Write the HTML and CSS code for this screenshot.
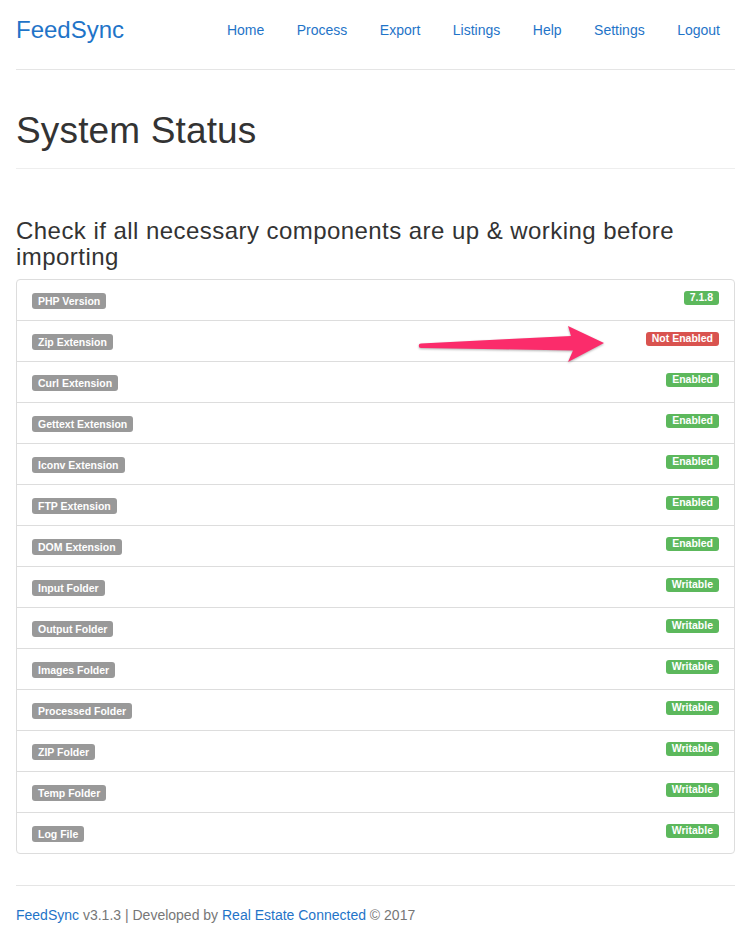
FILE: index.html
```html
<!DOCTYPE html>
<html lang="en">
<head>
<meta charset="utf-8">
<title>FeedSync - System Status</title>
<link rel="stylesheet" href="styles.css">
</head>
<body>
<div class="container">
  <header class="header">
    <a class="brand" href="#">FeedSync</a>
    <nav class="nav">
      <a href="#">Home</a>
      <a href="#">Process</a>
      <a href="#">Export</a>
      <a href="#">Listings</a>
      <a href="#">Help</a>
      <a href="#">Settings</a>
      <a href="#">Logout</a>
    </nav>
  </header>

  <div class="page-header">
    <h1>System Status</h1>
  </div>

  <h3 class="subtitle">Check if all necessary components are up &amp; working before importing</h3>

  <div class="list">
    <div class="row"><span class="label">PHP Version</span><span class="badge ok">7.1.8</span></div>
    <div class="row"><span class="label">Zip Extension</span><span class="badge bad">Not Enabled</span></div>
    <div class="row"><span class="label">Curl Extension</span><span class="badge ok">Enabled</span></div>
    <div class="row"><span class="label">Gettext Extension</span><span class="badge ok">Enabled</span></div>
    <div class="row"><span class="label">Iconv Extension</span><span class="badge ok">Enabled</span></div>
    <div class="row"><span class="label">FTP Extension</span><span class="badge ok">Enabled</span></div>
    <div class="row"><span class="label">DOM Extension</span><span class="badge ok">Enabled</span></div>
    <div class="row"><span class="label">Input Folder</span><span class="badge ok">Writable</span></div>
    <div class="row"><span class="label">Output Folder</span><span class="badge ok">Writable</span></div>
    <div class="row"><span class="label">Images Folder</span><span class="badge ok">Writable</span></div>
    <div class="row"><span class="label">Processed Folder</span><span class="badge ok">Writable</span></div>
    <div class="row"><span class="label">ZIP Folder</span><span class="badge ok">Writable</span></div>
    <div class="row"><span class="label">Temp Folder</span><span class="badge ok">Writable</span></div>
    <div class="row"><span class="label">Log File</span><span class="badge ok">Writable</span></div>

    <svg class="arrow" width="192" height="46" viewBox="0 0 192 46" aria-hidden="true">
      <path d="M4 23.5 L154 16 L151 6 L187 23 L151 42 L156 30.5 L4 28 A2.25 2.25 0 0 1 4 23.5 Z" fill="#fb2c6b"/>
    </svg>
  </div>

  <footer class="footer">
    <a href="#">FeedSync</a> v3.1.3 | Developed by <a href="#">Real Estate Connected</a> © 2017
  </footer>
</div>
</body>
</html>
```

FILE: styles.css
```css
* { box-sizing: border-box; }

body {
  margin: 0;
  font-family: "Liberation Sans", Arial, Helvetica, sans-serif;
  font-size: 14px;
  line-height: 20px;
  color: #333;
  background: #fff;
}

a { color: #1f74c8; text-decoration: none; }

.container {
  width: 719px;
  margin-left: 16px;
}

.header {
  display: flex;
  align-items: center;
  justify-content: space-between;
  height: 70px;
  padding-bottom: 9px;
  border-bottom: 1px solid #e5e5e5;
}

.brand {
  font-size: 24px;
  line-height: 26px;
}

.nav {
  display: flex;
  gap: 2.5px;
}

.nav a {
  padding: 10px 15px;
  font-size: 14px;
  line-height: 20px;
}

.page-header {
  margin-top: 40px;
  padding-bottom: 17px;
  border-bottom: 1px solid #eee;
}

.page-header h1 {
  margin: 0;
  font-size: 37px;
  line-height: 41px;
  font-weight: 500;
  color: #333;
  letter-spacing: 0.15px;
}

.subtitle {
  margin: 49px 0 9px;
  font-size: 24px;
  line-height: 26px;
  font-weight: 500;
  color: #333;
  letter-spacing: 0.45px;
}

.list {
  position: relative;
  border: 1px solid #ddd;
  border-radius: 4px;
}

.row {
  display: flex;
  justify-content: space-between;
  align-items: flex-start;
  height: 41px;
  padding: 10px 15px;
  border-top: 1px solid #ddd;
}

.row:first-child {
  height: 40px;
  border-top: 0;
}

.label,
.badge {
  display: inline-block;
  font-size: 10.5px;
  font-weight: bold;
  color: #fff;
  white-space: nowrap;
  border-radius: 3px;
  padding-left: 6px;
  padding-right: 6px;
}

.label {
  margin-top: 3px;
  height: 16px;
  line-height: 11px;
  padding-top: 2.5px;
  background: #999;
}

.badge {
  margin-top: 0.5px;
  height: 14px;
  line-height: 11px;
  padding-top: 1.5px;
}

.badge.ok { background: #5cb85c; }
.badge.bad { background: #d9534f; }

.arrow {
  position: absolute;
  left: 400px;
  top: 40px;
  filter: drop-shadow(0 1px 1px rgba(0, 0, 0, 0.3));
}

.footer {
  margin-top: 31px;
  border-top: 1px solid #e5e5e5;
  padding-top: 19px;
  color: #777;
  font-size: 14px;
  line-height: 20px;
}
```
